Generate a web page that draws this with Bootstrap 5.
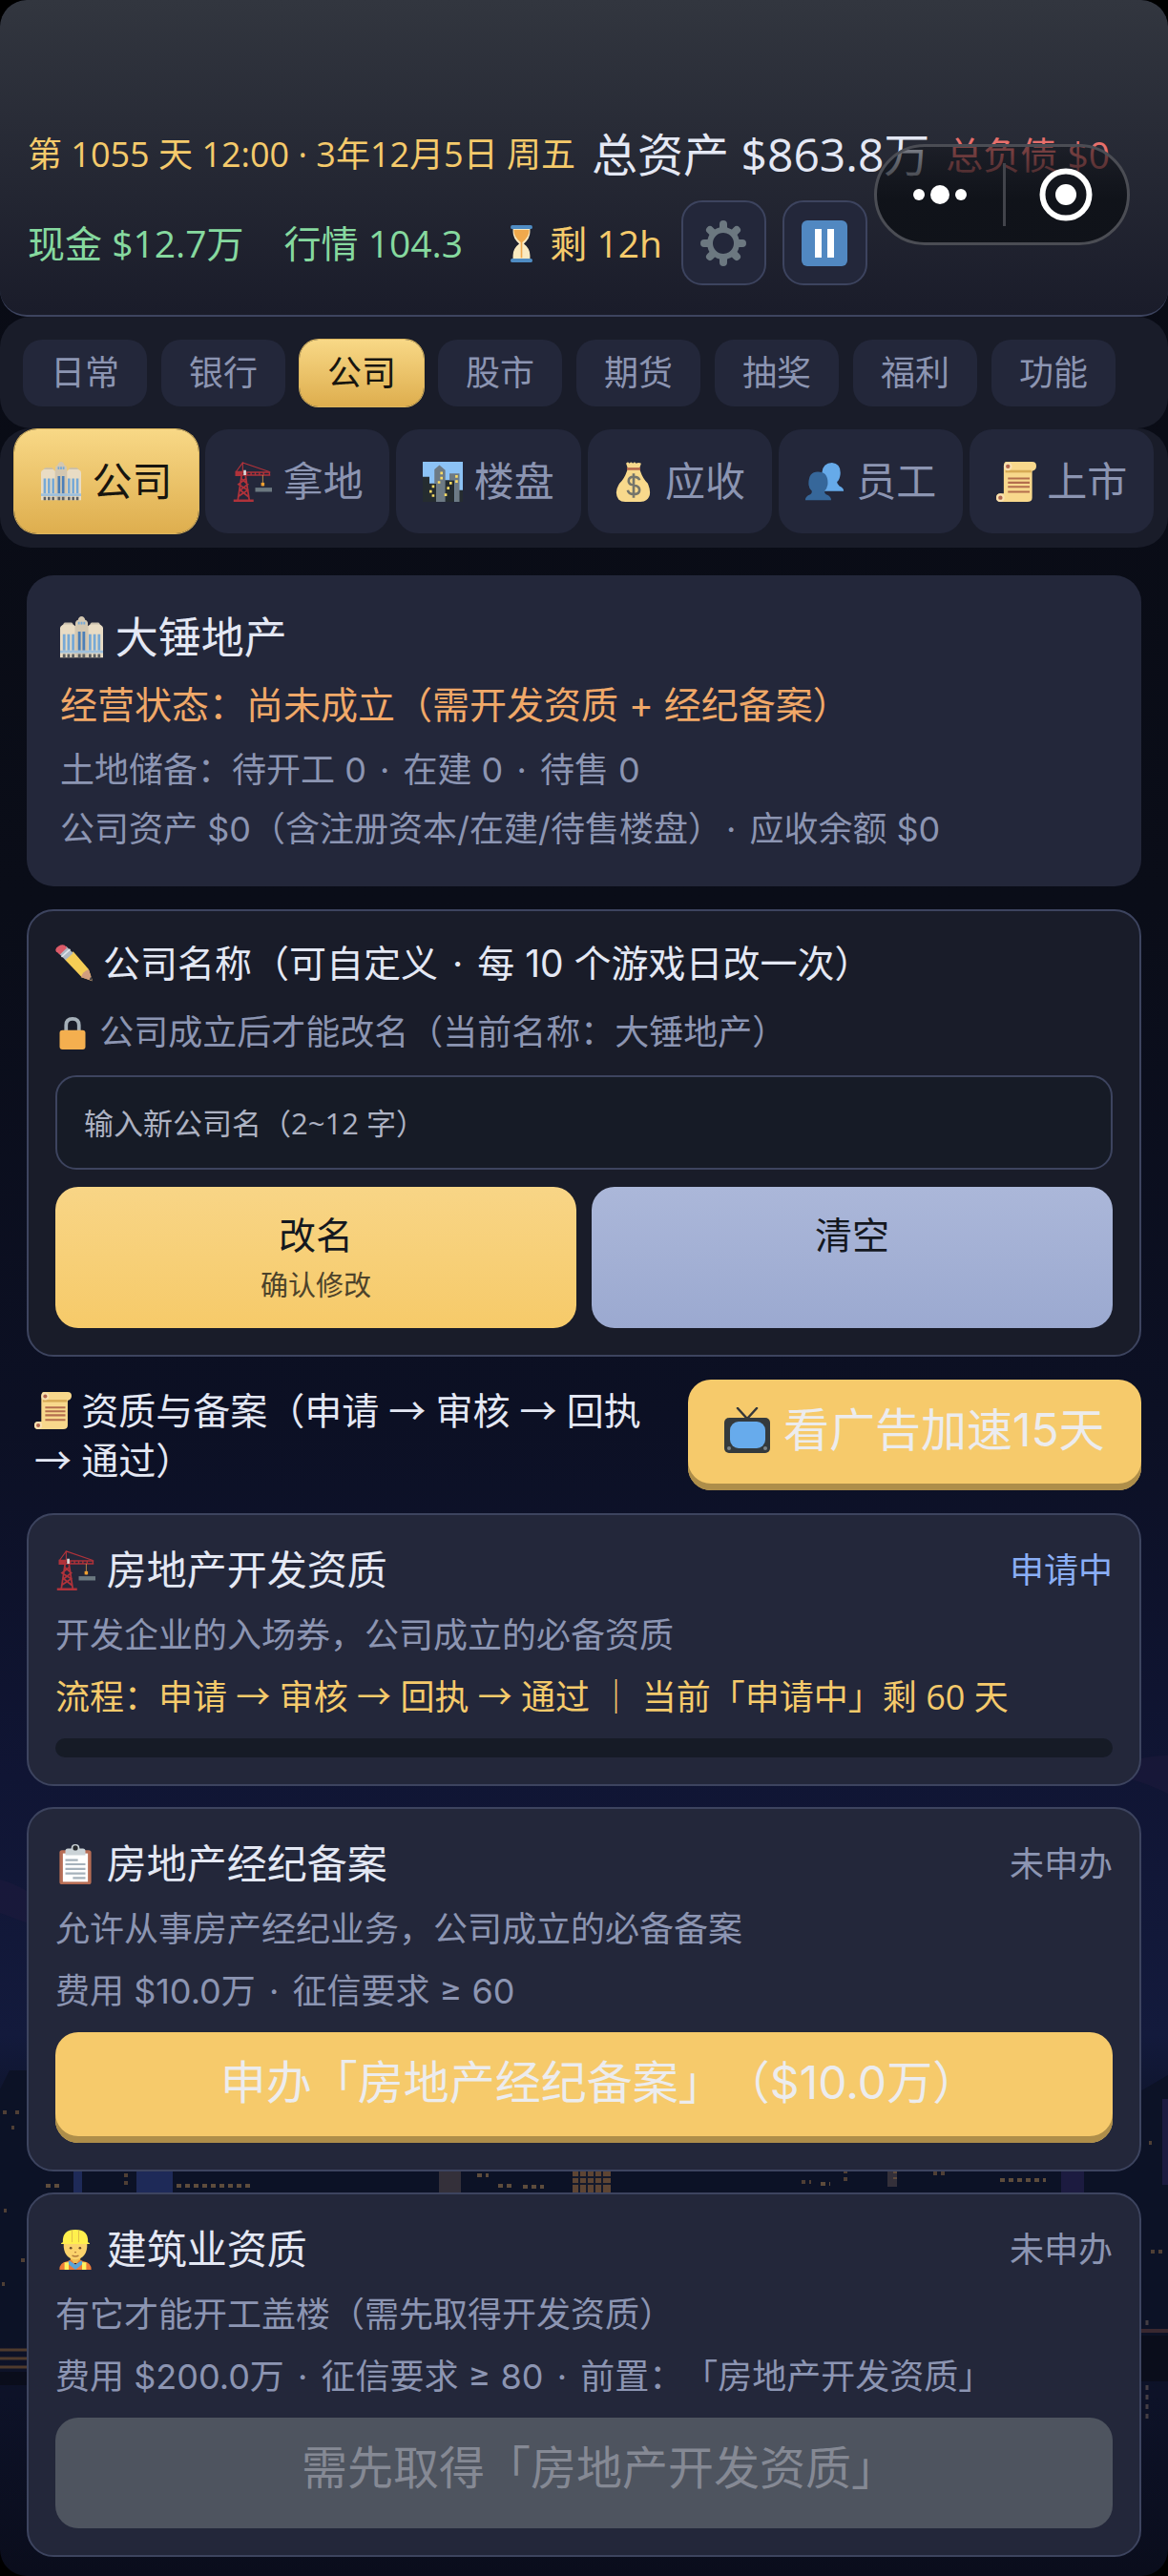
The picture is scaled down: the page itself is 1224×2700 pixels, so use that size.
<!DOCTYPE html>
<html lang="zh-CN">
<head>
<meta charset="utf-8">
<meta name="viewport" content="width=device-width, initial-scale=1">
<title>公司 · 大锤地产</title>
<link href="https://cdn.jsdelivr.net/npm/bootstrap@5.3.0/dist/css/bootstrap.min.css" rel="stylesheet">
<style>
  :root { --ink:#e4e8f4; --muted-ink:#8c95b2; --gold:#f5ca6b; --panel:#191c29; --surface:#23273a; --line:#3d445f; --well:#161b26; }
  body { background:#000; color:var(--ink); font-family:Inter,"Noto Sans CJK SC",sans-serif; font-size:36px; line-height:54px; text-spacing-trim:space-all; }
  .shell { min-height:100vh; border-radius:28px; background:linear-gradient(#090b14 0%,#0a0d18 35%,#0c1024 55%,#101534 69%,#131a3c 79%,#0c1226 83%,#0d1228 93%,#0a0d1c 100%); isolation:isolate; }
  .skyline { position:absolute; left:0; bottom:0; width:100%; height:900px; z-index:-1; }
  .ico { width:1em; height:1em; vertical-align:-.14em; flex:none; }
  .fs-sub { font-size:39px; }
  .fs-big { font-size:48px; }
  .t-gold { color:var(--gold); } .t-green { color:#86d99f; } .t-red { color:#e8706c; }
  .t-orange { color:#f0a868; } .t-blue { color:#8aaef5; } .t-muted { color:var(--muted-ink); }
  .hud, .flow-text, .name-input { font-family:"Open Sans","Noto Sans CJK SC",sans-serif; }

  .hud { background:linear-gradient(#32363f,#1a1c2a); border-bottom:2px solid var(--line); border-radius:28px; padding:132px 29px 31px; }
  .hud-top { gap:17px; height:60px; white-space:nowrap; }
  .hud-stats { gap:42px; margin-top:18px; white-space:nowrap; }
  .hud-tools { gap:17px; margin-left:-22px; }
  .btn-tool { width:89px; height:89px; padding:0; border:2px solid var(--line); border-radius:22px; background:var(--surface); font-size:48px; line-height:1; }
  .capsule { position:absolute; top:151px; right:40px; width:268px; height:106px; border:3px solid #4b4d54; border-radius:53px; background:linear-gradient(rgba(18,20,26,.5),rgba(14,17,23,.9) 55%); }
  .capsule button { border:0; background:none; padding:0; }
  .capsule .sep { width:3px; height:66px; background:#42444b; }

  .tabs-main, .tabs-sub { background:var(--panel); border-radius:32px; }
  .tabs-main { gap:15px; padding:24px 24px 23px; }
  .tabs-main .nav-link { width:130px; height:70px; line-height:70px; border-radius:20px; }
  .tabs-sub { gap:7px; padding:1px 15px 15px; }
  .tabs-sub .nav-link { height:109px; line-height:109px; font-size:42px; border-radius:24px; }
  .nav-link.tab { padding:0; text-align:center; color:var(--muted-ink); background:var(--surface); white-space:nowrap; }
  .nav-link.tab.active { color:#17150f; background:linear-gradient(#f8d886,#deae4e); box-shadow:0 0 0 1px #dcb65e; }

  .content { padding:29px 28px 16px; gap:24px; }
  .panel { border:2px solid var(--line); border-radius:28px; padding:28px; background:var(--surface); }
  .panel-plain { border:0; padding:36px 35px 33px; }
  .panel-form { background:var(--panel); gap:18px; }
  .summary h1 { font-size:45px; line-height:60px; }
  .status-line { line-height:60px; margin-top:10px; }
  .panel h2 { font-size:42px; line-height:60px; }
  .mt-line { margin-top:11px; }
  .licences { gap:22px; }
  .name-input, .name-input:focus { height:99px; border:2px solid var(--line); border-radius:22px; background:var(--well); color:var(--ink); font-size:31px; padding:0 28px; box-shadow:none; }
  .name-input::placeholder { color:#adb2c2; }
  .btn-duo { height:148px; border:0; border-radius:24px; padding:24px 0 0; color:#14181f; font-size:39px; line-height:54px; background:linear-gradient(#abb7d9,#9ba9d0); }
  .btn-duo.primary { background:linear-gradient(#f8d586,#f6ca69); }
  .btn-duo small { font-size:29px; line-height:52px; color:#4d432b; }
  .btn-gold { height:116px; border:0; border-radius:24px; padding:0 0 10px; font-size:48px; line-height:106px; color:#ececee; background:#f6ca6b; box-shadow:inset 0 -7px #ae8e4a; white-space:nowrap; }
  .btn-gold:hover, .btn-gold:focus { color:#ececee; background:#f6ca6b; }
  .btn-gold:disabled { opacity:1; color:#858994; background:#4e545f; box-shadow:none; }
  .btn-apply { padding-left:32px; }
  .btn-ad { width:475px; flex:none; }
  .section-head { padding-left:8px; gap:32px; }
  .section-head h2 { font-size:39px; line-height:52px; }
  .meter { height:20px; border-radius:10px; background:var(--well); }
  .mt-act { margin-top:16px; }
</style>
<script src="https://cdn.jsdelivr.net/npm/bootstrap@5.3.0/dist/js/bootstrap.bundle.min.js"></script>
</head>
<body>
<svg class="d-none" aria-hidden="true">
  <symbol id="i-hall" viewBox="0 0 48 48">
    <path d="M0 13q0-2 2-3l3-2h8l4 3v35H0zM48 13q0-2-2-3l-3-2h-8l-4 3v35h17z" fill="#e9dcc4"/>
    <path d="M3 9l2-2h8l2 2zM33 9l2-2h8l2 2z" fill="#c9bfac"/>
    <path d="M17 8q0-3 3-4 1-4 4-4t4 4q3 1 3 4v38H17z" fill="#d3c7b1"/>
    <path d="M3 20h3v18H3zM8 20h3v18H8zM13 20h3v18h-3zM32 20h3v18h-3zM37 20h3v18h-3zM42 20h3v18h-3zM20 6h2v3h-2zM23 6h2v3h-2zM26 6h2v3h-2z" fill="#77a9d6"/>
    <path d="M20 17h3v21h-3zM25 17h3v21h-3z" fill="#4b7fb8"/>
    <path d="M0 38h48v3H0z" fill="#9fc0db"/><path d="M3 42h3v4H3zM8 42h3v4H8zM13 42h3v4h-3zM20 42h3v4h-3zM25 42h3v4h-3zM32 42h3v4h-3zM37 42h3v4h-3zM42 42h3v4h-3z" fill="#5b5f63"/>
  </symbol>
  <symbol id="i-crane" viewBox="0 0 48 48">
    <g fill="none" stroke="#b0323a"><path d="M7 47l5-33M21 47l-5-33M11 20l8 7-9 7 10 8M17 20l-9 7 11 7-12 8" stroke-width="2"/><path d="M13 12V1l32 11M13 1L5 12" stroke-width="1.3"/><path d="M12 12.500h34M12 16h34M18 12v4M23 12v4M28 12v4M33 12v4M38 12v4M45 12v4" stroke-width="1.600"/></g>
    <path d="M4 11h9v6H4zM2 45h24v3H2z" fill="#b0323a"/><path d="M14 10h3v6h-3z" fill="#ddd"/>
    <path d="M37 16v13" stroke="#c8914a" stroke-width="1"/><path d="M35 25h4v4h-4z" fill="#f0a030"/><path d="M28 31h20v5H28z" fill="#6b7880"/>
  </symbol>
  <symbol id="i-city" viewBox="0 0 48 48">
    <clipPath id="cc"><rect width="48" height="48" rx="6"/></clipPath>
    <g clip-path="url(#cc)"><path d="M0 0h48v48H0z" fill="#8cc2f5"/><path d="M0 18h8v8h10v22H0zM24 22h14v26H24zM42 34h6v14h-6z" fill="#252c30"/><path d="M14 9l6-5 7 6v38H16V26h-2zM32 14h12v34h-6V22h-6z" fill="#6d7a84"/>
    <path d="M21 12h3v3h-3zM21 18h3v3h-3zM18 23h3v3h-3zM39 16h3v3h-3zM39 22h3v3h-3zM11 28h3v3h-3zM8 34h3v3H8zM11 39h3v3h-3zM32 24h3v3h-3zM29 30h3v3h-3zM26 38h3v3h-3z" fill="#fadb63"/></g>
  </symbol>
  <symbol id="i-bag" viewBox="0 0 48 48">
    <path d="M15 2q2-3 4 0 2-3 4 0 2-3 4 0 3-2 6 0l-2 6 1 3q3 9 9 15 6 14-2 20-2 2-7 2H14q-5 0-8-3-6-8 1-19 6-6 9-15l1-3z" fill="#f8d98c"/><path d="M16 7h16v3H16z" fill="#b5694d"/>
    <path d="M31 22q-1-4-7-4-6 0-6 5 0 4 6 5 7 1 7 6 0 5-7 5-6 0-7-5M24 14v29" fill="none" stroke="#75756b" stroke-width="3"/>
  </symbol>
  <symbol id="i-people" viewBox="0 0 48 48">
    <path d="M21 13Q22 1 33 1q11 1 10 14-1 7-4 9 0 3 3 5 5 2 5 6H20z" fill="#66aae9"/>
    <path d="M5 26q0-14 11-14 12 0 12 13 0 6-4 10 0 3 2 4 6 2 6 7H1q0-5 6-7 2-1 2-4-4-3-4-9z" fill="#36679a"/>
  </symbol>
  <symbol id="i-scroll" viewBox="0 0 48 48">
    <path d="M12 0h31q5 0 5 5t-5 6v32q0 5-6 5H5q-5 0-5-5t5-5h4V6q0-6 3-6z" fill="#f8d88c"/><path d="M11 10h31v3H11z" fill="#d7aa55"/>
    <circle cx="14" cy="5.500" r="5" fill="#f9e1b0"/><circle cx="14" cy="5.500" r="2.500" fill="#b0654d"/><circle cx="5" cy="43" r="5" fill="#f9e1b0"/><circle cx="5" cy="43" r="2.500" fill="#b0654d"/>
    <path d="M14 20h26M14 25h26M14 30h26M14 36h26" stroke="#b46e4e" stroke-width="2.500"/>
  </symbol>
  <symbol id="i-pencil" viewBox="0 0 48 48">
    <path d="M12 19l11-10 20 23 5 15-14-5z" fill="#f5cd55"/><path d="M33 42q2-7 10-10l5 15z" fill="#d29d7e"/><path d="M44 45l2-4 2 6z" fill="#3b3d42"/>
    <path d="M4 11L14 2l9 9-10 9z" fill="#aeb8c2"/><path d="M8 16L19 6" stroke="#dfe6ec" stroke-width="2"/><path d="M1 9q-2-4 3-7t8-1l3 3-9 9z" fill="#dc5a68"/>
  </symbol>
  <symbol id="i-lock" viewBox="0 0 48 48"><path d="M15 25V14q0-9 9-9t9 9v11" fill="none" stroke="#a5b0b9" stroke-width="5"/><rect x="6" y="21" width="36" height="27" rx="4" fill="#f4af4f"/></symbol>
  <symbol id="i-tv" viewBox="0 0 48 48">
    <path d="M14 1l10 11L34 1" fill="none" stroke="#35373a" stroke-width="2.500" stroke-linecap="round"/><rect y="11" width="48" height="37" rx="5" fill="#343a3d"/><rect x="6" y="15" width="37" height="28" rx="9" fill="#67abec"/><circle cx="5" cy="43" r="2" fill="#7b8489"/><circle cx="43" cy="43" r="2" fill="#7b8489"/>
  </symbol>
  <symbol id="i-clip" viewBox="0 0 48 48">
    <rect x="5" y="7" width="38" height="41" rx="3" fill="#b76d55"/><path d="M9 11h30v34H9z" fill="#fff"/><path d="M12 13V8q0-3 3-3h4q0-5 5-5t5 5h4q3 0 3 3v5z" fill="#cbd3d7"/><circle cx="24" cy="4.500" r="3" fill="#26282c"/>
    <path d="M12 19h15M12 24h24M12 29.500h24M12 35h24M21 40.500h15" stroke="#a5b1bb" stroke-width="2.500"/>
  </symbol>
  <symbol id="i-worker" viewBox="0 0 48 48">
    <path d="M18 32h12v8H18z" fill="#eebf52"/><path d="M5 48q0-9 9-10l5-2 5 6 5-6 5 2q9 1 9 10z" fill="#ec7b38"/><path d="M17 37l7 5 7-5 3 3-10 8-10-8z" fill="#58a4d8"/><path d="M11 39h5v9h-5zM32 39h5v9h-5z" fill="#fff15e"/>
    <path d="M10 16h28q1 18-14 20Q9 34 10 16z" fill="#fbd36c"/><path d="M9 15Q8 0 24 0t15 15l2 1v1H7v-1z" fill="#fff04d"/><path d="M20 1v14M28 1v14" stroke="#dcb84a"/>
    <circle cx="18.500" cy="22" r="1.500" fill="#6b4a2a"/><circle cx="29.500" cy="22" r="1.500" fill="#6b4a2a"/><path d="M20 31q4 2 8 0M23 27h2" fill="none" stroke="#b07a3a" stroke-width="1.500"/>
  </symbol>
  <symbol id="i-glass" viewBox="0 0 48 48">
    <path d="M13 3h22v6q0 8-8 15 8 6 8 15v6H13v-6q0-9 8-15-8-7-8-15z" fill="#faeac0"/><path d="M14 6h20q0 9-9 16v20h-2V22Q14 15 14 6z" fill="#f0a94c"/><rect x="10" width="28" height="5" rx="2" fill="#4f8cc3"/><rect x="10" y="43" width="28" height="5" rx="2" fill="#4f8cc3"/>
  </symbol>
  <symbol id="i-gear" viewBox="0 0 48 48">
    <circle cx="24" cy="24" r="14" fill="none" stroke="#6c7880" stroke-width="6"/><path d="M24 8V4M24 40v4M8 24H4M40 24h4M12.500 12.500L10 10M35.500 35.500L38 38M12.500 35.500L10 38M35.500 12.500L38 10" stroke="#6c7880" stroke-width="8" stroke-linecap="round"/>
  </symbol>
  <symbol id="i-pause" viewBox="0 0 48 48"><rect width="48" height="48" rx="6" fill="#5188c1"/><path d="M14 9h7v30h-7zM27 9h7v30h-7z" fill="#fff"/></symbol>
</svg>

<div class="shell position-relative overflow-hidden">
  <!-- night skyline behind the panels -->
  <svg class="skyline" viewBox="0 0 1224 900" preserveAspectRatio="none" aria-hidden="true">
    <path d="M1150 60q40-20 74-20v40q-40-20-74-20zM0 170q20 5 40 20v30L0 205z" fill="#241b3f" opacity=".4"/>
    <path d="M0 390l10-20h50v40h90v20h130v-15h150v25h160v-30h120v20h130v-15h160v-20h190l34-20v285H0z" fill="#0c1226"/>
    <path d="M77 460h9v50h-9zM143 460h38v50h-38z" fill="#1e2a58"/><path d="M1112 440h24v70h-24zM1218 400h6v90h-6z" fill="#1c1b40"/>
    <path d="M460 465h23v40h-23zM930 472h10v20h-10z" fill="#34303a"/><path d="M600 470h40v28h-40z" fill="#5e4534"/>
    <path d="M600 475h40M600 482h40M600 489h40M607 470v28M615 470v28M623 470v28M631 470v28" stroke="#151a2c" stroke-width="2"/>
    <g fill="none" stroke-width="4" opacity=".6">
      <path d="M185 491h77M522 491h14M548 492h22M860 474h18M860 489h10M1048 485h48M48 491h16M500 480h12" stroke="#93734c" stroke-dasharray="5 4"/>
      <path d="M132 478v16M886 474v12M938 474v10M978 478h14M840 487h10M3 414h4M16 414h4M12 430h3M4 517h3M22 569h4M2 594h3M1204 446h3M1206 560h12" stroke="#7d5e40" stroke-dasharray="4 4"/>
    </g>
    <path d="M0 663h60M0 672h60M0 681h60" stroke="#60452f" stroke-width="3" opacity=".8"/><path d="M1190 643h34" stroke="#3a2830" stroke-width="4"/>
    <path d="M1202 637v-8M1202 700v40" stroke="#7d6b60" stroke-width="3" stroke-dasharray="5 5" opacity=".5"/><path d="M1190 648h34v48h-34zM0 686h40v14H0z" fill="#0a0d1b"/>
  </svg>

  <header class="hud">
    <div class="hud-top d-flex align-items-center">
      <span class="t-gold">第 1055 天 12:00 · 3年12月5日 周五</span>
      <span class="fs-big">总资产 $863.8万</span>
      <span class="fs-sub t-red">总负债 $0</span>
    </div>
    <div class="hud-stats d-flex align-items-center fs-sub">
      <span class="t-green">现金 $12.7万</span>
      <span class="t-green">行情 104.3</span>
      <span class="t-gold"><svg class="ico"><use href="#i-glass"/></svg> 剩 12h</span>
      <div class="hud-tools d-flex">
        <button type="button" class="btn btn-tool d-flex align-items-center justify-content-center" aria-label="设置"><svg class="ico"><use href="#i-gear"/></svg></button>
        <button type="button" class="btn btn-tool d-flex align-items-center justify-content-center" aria-label="暂停"><svg class="ico"><use href="#i-pause"/></svg></button>
      </div>
    </div>
  </header>

  <div class="capsule d-flex align-items-center">
    <button type="button" class="flex-fill d-flex justify-content-center" aria-label="更多"><svg width="60" height="24" viewBox="0 0 60 24" fill="#fff"><circle cx="8" cy="12" r="6"/><circle cx="30" cy="12" r="10"/><circle cx="52" cy="12" r="6"/></svg></button>
    <span class="sep"></span>
    <button type="button" class="flex-fill d-flex justify-content-center" aria-label="关闭"><svg width="56" height="56" viewBox="0 0 56 56"><circle cx="28" cy="28" r="24.500" fill="none" stroke="#fff" stroke-width="6"/><circle cx="28" cy="28" r="11" fill="#fff"/></svg></button>
  </div>

  <nav class="nav tabs-main flex-nowrap">
    <a class="nav-link tab" href="#">日常</a>
    <a class="nav-link tab" href="#">银行</a>
    <a class="nav-link tab active" aria-current="page" href="#">公司</a>
    <a class="nav-link tab" href="#">股市</a>
    <a class="nav-link tab" href="#">期货</a>
    <a class="nav-link tab" href="#">抽奖</a>
    <a class="nav-link tab" href="#">福利</a>
    <a class="nav-link tab" href="#">功能</a>
  </nav>
  <nav class="nav nav-fill tabs-sub flex-nowrap">
    <a class="nav-link tab active" aria-current="page" href="#"><svg class="ico"><use href="#i-hall"/></svg> 公司</a>
    <a class="nav-link tab" href="#"><svg class="ico"><use href="#i-crane"/></svg> 拿地</a>
    <a class="nav-link tab" href="#"><svg class="ico"><use href="#i-city"/></svg> 楼盘</a>
    <a class="nav-link tab" href="#"><svg class="ico"><use href="#i-bag"/></svg> 应收</a>
    <a class="nav-link tab" href="#"><svg class="ico"><use href="#i-people"/></svg> 员工</a>
    <a class="nav-link tab" href="#"><svg class="ico"><use href="#i-scroll"/></svg> 上市</a>
  </nav>

  <main class="content d-flex flex-column">
    <section class="panel panel-plain summary">
      <h1 class="m-0 fw-normal"><svg class="ico"><use href="#i-hall"/></svg> 大锤地产</h1>
      <p class="fs-sub t-orange status-line mb-0">经营状态：尚未成立（需开发资质 + 经纪备案）</p>
      <p class="t-muted mt-line mb-0">土地储备：待开工 0 <span class="px-1">·</span> 在建 0 <span class="px-1">·</span> 待售 0</p>
      <p class="t-muted mt-2 mb-0">公司资产 $0（含注册资本/在建/待售楼盘）<span class="px-1">·</span> 应收余额 $0</p>
    </section>

    <form class="panel panel-form d-flex flex-column">
      <label class="fs-sub" for="companyName"><svg class="ico"><use href="#i-pencil"/></svg> 公司名称（可自定义 <span class="px-1">·</span> 每 10 个游戏日改一次）</label>
      <div class="t-muted"><svg class="ico"><use href="#i-lock"/></svg> 公司成立后才能改名（当前名称：大锤地产）</div>
      <input class="form-control name-input" id="companyName" type="text" placeholder="输入新公司名（2~12 字）">
      <div class="d-flex gap-3">
        <button type="button" class="btn btn-duo primary w-50 d-flex flex-column align-items-center">改名<small>确认修改</small></button>
        <button type="reset" class="btn btn-duo w-50 d-flex flex-column align-items-center">清空</button>
      </div>
    </form>

    <div class="section-head d-flex align-items-center justify-content-between">
      <h2 class="m-0 fw-normal flow-text"><svg class="ico"><use href="#i-scroll"/></svg> 资质与备案（申请 → 审核 → 回执 → 通过）</h2>
      <button type="button" class="btn btn-gold btn-ad"><svg class="ico"><use href="#i-tv"/></svg> 看广告加速15天</button>
    </div>

    <div class="licences d-flex flex-column">
      <article class="panel">
        <div class="d-flex justify-content-between align-items-center">
          <h2 class="m-0 fw-normal"><svg class="ico"><use href="#i-crane"/></svg> 房地产开发资质</h2><span class="t-blue">申请中</span>
        </div>
        <p class="t-muted mt-line mb-0">开发企业的入场券，公司成立的必备资质</p>
        <p class="t-gold mt-line mb-0 flow-text">流程：申请 → 审核 → 回执 → 通过 ｜ 当前「申请中」剩 60 天</p>
        <div class="progress meter mt-act" role="progressbar" aria-label="申请进度" aria-valuenow="0" aria-valuemin="0" aria-valuemax="100"><div class="progress-bar" style="width:0%"></div></div>
      </article>
      <article class="panel">
        <div class="d-flex justify-content-between align-items-center">
          <h2 class="m-0 fw-normal"><svg class="ico"><use href="#i-clip"/></svg> 房地产经纪备案</h2><span class="t-muted">未申办</span>
        </div>
        <p class="t-muted mt-line mb-0">允许从事房产经纪业务，公司成立的必备备案</p>
        <p class="t-muted mt-line mb-0">费用 $10.0万 <span class="px-1">·</span> 征信要求 ≥ 60</p>
        <button type="button" class="btn btn-gold btn-apply w-100 d-block mt-act">申办「房地产经纪备案」（$10.0万）</button>
      </article>
      <article class="panel">
        <div class="d-flex justify-content-between align-items-center">
          <h2 class="m-0 fw-normal"><svg class="ico"><use href="#i-worker"/></svg> 建筑业资质</h2><span class="t-muted">未申办</span>
        </div>
        <p class="t-muted mt-line mb-0">有它才能开工盖楼（需先取得开发资质）</p>
        <p class="t-muted mt-line mb-0">费用 $200.0万 <span class="px-1">·</span> 征信要求 ≥ 80 <span class="px-1">·</span> 前置：「房地产开发资质」</p>
        <button type="button" class="btn btn-gold btn-apply w-100 d-block mt-act" disabled>需先取得「房地产开发资质」</button>
      </article>
    </div>
  </main>
</div>
</body>
</html>
